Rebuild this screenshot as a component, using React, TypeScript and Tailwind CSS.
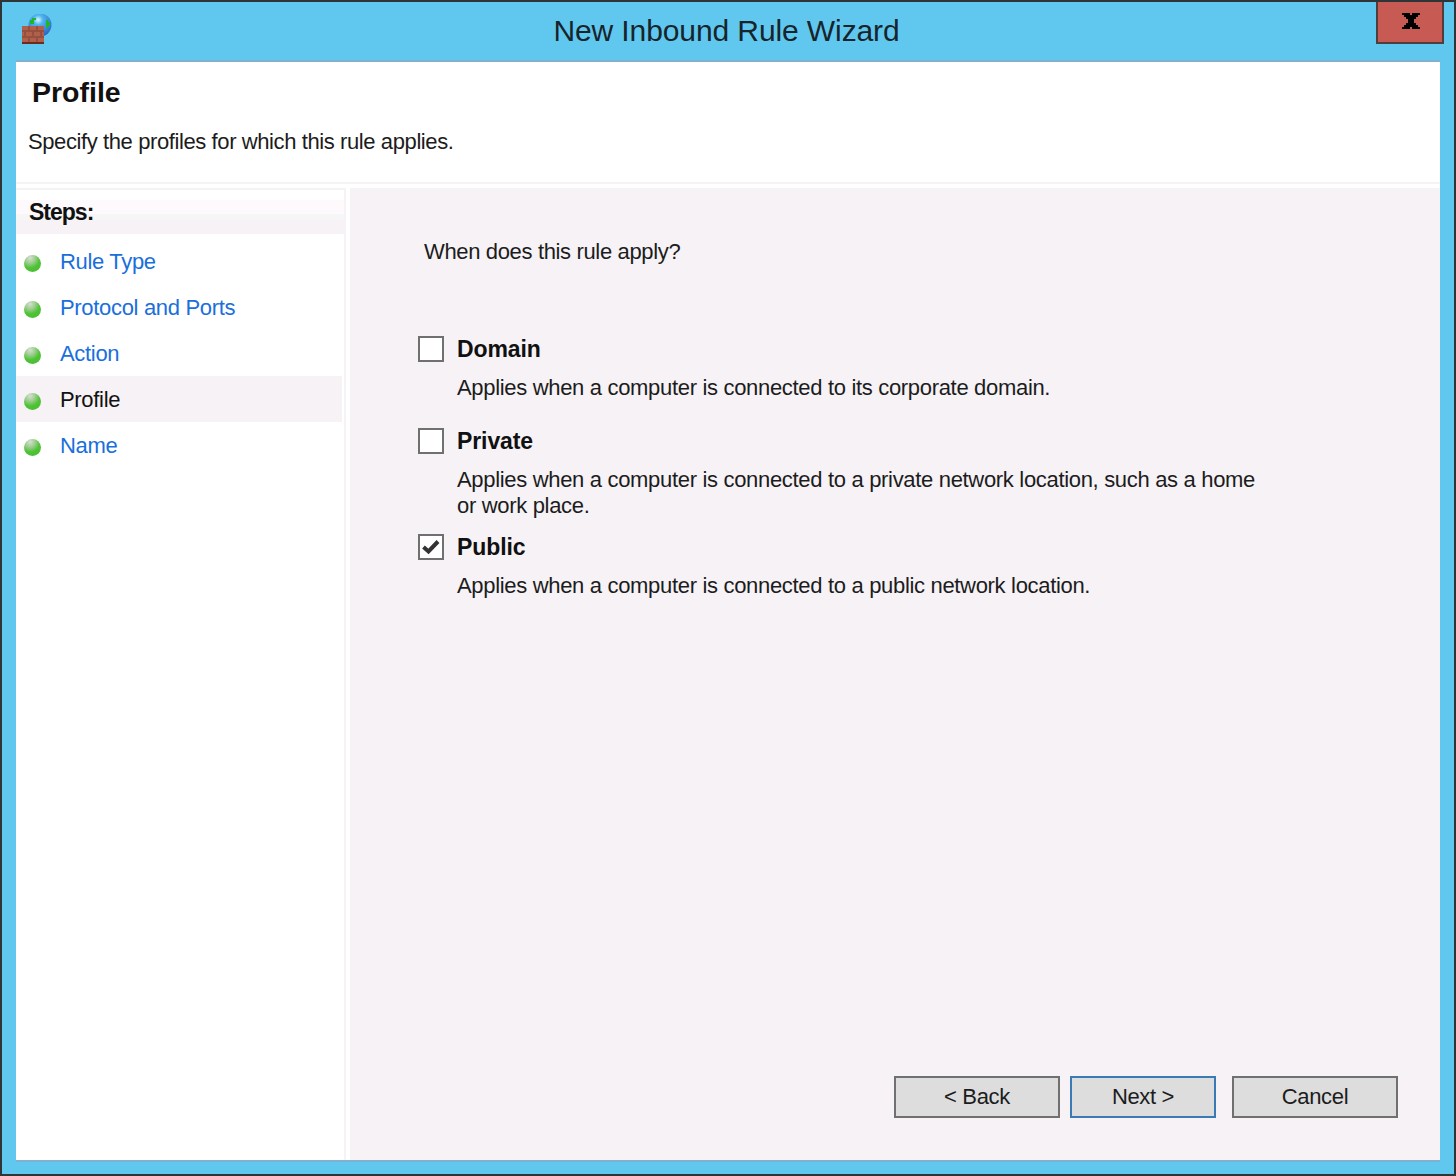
const font = "font-['Liberation_Sans',Arial,sans-serif]";

const steps = [
  { label: "Rule Type" },
  { label: "Protocol and Ports" },
  { label: "Action" },
  { label: "Profile", current: true },
  { label: "Name" },
];

function FirewallIcon() {
  return (
    <svg width="30" height="30" viewBox="0 0 30 30" shapeRendering="crispEdges" className="block">
      <defs>
        <radialGradient id="globe" cx="0.42" cy="0.28" r="0.75">
          <stop offset="0" stopColor="#d8fbff" />
          <stop offset="0.28" stopColor="#4fb4ee" />
          <stop offset="1" stopColor="#2a62c0" />
        </radialGradient>
      </defs>
      <circle cx="18" cy="11" r="11.5" fill="url(#globe)" shapeRendering="auto" />
      <path d="M8 6h2V4h4v2h-2v4H8zM24 6h2v2h2v4h-2v2h-2z" fill="#1fb52c" />
      <path d="M0 12h22v18H0z" fill="#b0604a" />
      <path d="M0 16h22v2H0zM0 22h22v2H0zM6 12h2v4H6zM14 12h2v4h-2zM2 18h2v4H2zM10 18h2v4h-2zM18 18h2v4h-2zM6 24h2v4H6zM14 24h2v4h-2z" fill="#98503e" />
      <path d="M0 28h22v2H0z" fill="#6b2b1e" />
    </svg>
  );
}

function StepRow({ label, current }: { label: string; current?: boolean }) {
  return (
    <div className={`flex h-[46px] w-[326px] items-center ${current ? "bg-[#f6f2f6] text-[#111]" : "text-[#1a6fdc]"}`}>
      <span className="ml-[8px] mt-[4px] h-[17px] w-[17px] rounded-full bg-[radial-gradient(circle_at_36%_18%,#d5dfd2_0%,#a3cf96_26%,#4fc236_56%,#47bb2d_100%)]" />
      <span className="ml-[19px] mt-[2px] text-[22px] leading-[28px] tracking-[-0.32px]">{label}</span>
    </div>
  );
}

function Option({ title, checked, className, children }: { title: string; checked?: boolean; className: string; children: React.ReactNode }) {
  return (
    <div className={className}>
      <div className="flex h-[26px] items-center">
        <span className="flex h-[26px] w-[26px] items-center justify-center border-2 border-[#707070] bg-white">
          {checked && (
            <svg width="18" height="16" viewBox="0 0 18 16">
              <path d="M1.5 8 L6.5 12.5 L16 2.5" fill="none" stroke="#333" strokeWidth="4" />
            </svg>
          )}
        </span>
        <span className="ml-[13px] text-[23px] font-bold leading-[26px] tracking-[-0.1px] text-[#111]">{title}</span>
      </div>
      <p className="ml-[39px] mt-[13px] w-[820px] text-[22px] leading-[26px] tracking-[-0.32px] text-[#1c1c1c]">{children}</p>
    </div>
  );
}

function WizardButton({ label, width, focused }: { label: string; width: string; focused?: boolean }) {
  return (
    <button
      type="button"
      className={`h-[42px] ${width} border-2 bg-[#dddddd] text-[22px] leading-[36px] tracking-[-0.35px] text-[#1c1c1c] ${focused ? "border-[#3a7ab5]" : "border-[#707070]"}`}
    >
      {label}
    </button>
  );
}

export default function App() {
  return (
    <div className={`${font} flex h-[1176px] w-[1456px] flex-col border-2 border-[#2f3436] bg-[#60c8ef]`}>
      <header className="flex h-[58px] shrink-0 items-start">
        <div className="ml-[20px] mt-[12px] w-[30px]">
          <FirewallIcon />
        </div>
        <div className="ml-[-43px] mr-[-68px] flex h-[58px] flex-1 items-center justify-center pb-[2px] text-[30px] tracking-[-0.1px] text-[#17242c]">
          New Inbound Rule Wizard
        </div>
        <div className="mr-[10px] flex h-[42px] w-[68px] items-center justify-center border-2 border-t-0 border-[#4e3f3c] bg-[#c75a52] pb-[2px] pl-[2px]">
          <svg width="18" height="16" viewBox="0 0 18 16" shapeRendering="crispEdges">
            <path d="M0 0h8v2h2V0h8v2h-2v2h-2v2h-2v4h2v2h2v2h2v2h-8v-2H8v2H0v-2h2v-2h2v-2h2V6H4V4H2V2H0z" fill="#000" />
          </svg>
        </div>
      </header>

      <div className="mx-[14px] mb-[12px] flex min-h-0 flex-1 flex-col border-y-2 border-[#7fb0cf] bg-white">
        <div className="h-[122px] shrink-0 border-b-2 border-[#f6f2f6]">
          <h1 className="ml-[16px] pt-[12px] text-[28.5px] font-bold leading-[36px] text-[#111]">Profile</h1>
          <p className="ml-[12px] mt-[18px] text-[22px] leading-[28px] tracking-[-0.4px] text-[#1c1c1c]">
            Specify the profiles for which this rule applies.
          </p>
        </div>

        <div className="mt-[4px] flex min-h-0 flex-1">
          <aside className="w-[330px] shrink-0 border-r-2 border-t-2 border-[#f6f2f6]">
            <div className="flex h-[44px] items-center bg-[linear-gradient(#ffffff_0,#ffffff_10px,#fdf9fc_10px,#fdf9fc_24px,#f6f6f6_24px,#f6f6f6_30px,#f6f2f6_30px)] pl-[13px] text-[23px] font-bold tracking-[-1px] text-[#111]">
              Steps:
            </div>
            <div className="mt-[4px]">
              {steps.map((s) => (
                <StepRow key={s.label} label={s.label} current={s.current} />
              ))}
            </div>
          </aside>

          <main className="ml-[4px] flex min-w-0 flex-1 flex-col bg-[#f6f2f6] pb-[42px] pr-[42px]">
            <p className="ml-[74px] mt-[50px] text-[22px] leading-[28px] tracking-[-0.35px] text-[#1c1c1c]">When does this rule apply?</p>
            <div className="ml-[68px]">
              <Option title="Domain" className="mt-[70px]">
                Applies when a computer is connected to its corporate domain.
              </Option>
              <Option title="Private" className="mt-[27px]">
                Applies when a computer is connected to a private network location, such as a home or work place.
              </Option>
              <Option title="Public" checked className="mt-[15px]">
                Applies when a computer is connected to a public network location.
              </Option>
            </div>
            <div className="mt-auto flex justify-end">
              <WizardButton label="< Back" width="w-[166px]" />
              <div className="ml-[10px]">
                <WizardButton label="Next >" width="w-[146px]" focused />
              </div>
              <div className="ml-[16px]">
                <WizardButton label="Cancel" width="w-[166px]" />
              </div>
            </div>
          </main>
        </div>
      </div>
    </div>
  );
}
